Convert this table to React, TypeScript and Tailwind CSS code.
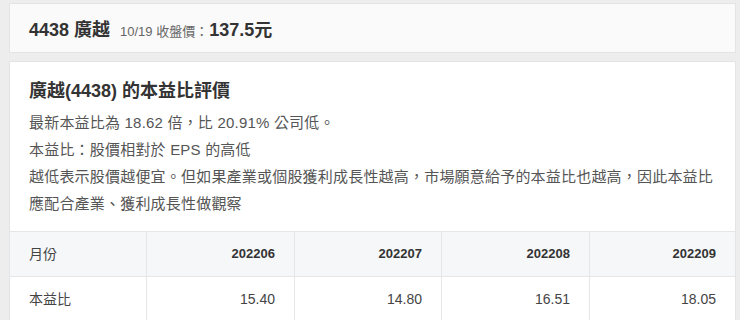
const months = ["202206", "202207", "202208", "202209"];
const values = ["15.40", "14.80", "16.51", "18.05"];

export default function App() {
  return (
    <div
      className="min-h-[320px] bg-[#ededed] pl-[9px] pr-[4px] pt-[3px] text-[#333]"
      style={{ fontFamily: '"Liberation Sans", Arial, "Noto Sans CJK TC", sans-serif' }}
    >
      <div className="flex h-[50px] items-baseline border border-[#e4e4e4] bg-[#fafafa] pl-[19px] pt-[13px]">
        <span className="text-[18px] font-bold text-[#333]">4438 廣越</span>
        <span className="ml-[10px] text-[13px] text-[#666]">10/19 收盤價：</span>
        <span className="ml-[1px] text-[18px] font-bold text-[#333]">137.5元</span>
      </div>

      <div className="mt-[8px] border border-[#e4e4e4] bg-white">
        <div className="px-[19px] pt-[17px]">
          <h2 className="text-[18px] font-bold leading-[24px] text-[#333]">廣越(4438) 的本益比評價</h2>
          <div className="mt-[6px] text-[15px] leading-[27px] tracking-[0.2px] text-[#555]">
            <p>最新本益比為 18.62 倍，比 20.91% 公司低。</p>
            <p>本益比：股價相對於 EPS 的高低</p>
            <p>越低表示股價越便宜。但如果產業或個股獲利成長性越高，市場願意給予的本益比也越高，因此本益比</p>
            <p>應配合產業、獲利成長性做觀察</p>
          </div>
        </div>

        <div className="mt-[14px] grid grid-cols-[137px_148px_147px_148px_1fr] border-t border-[#e6e6e6] text-[14px]">
          <div className="flex h-[45px] items-center border-b border-r border-[#e6e6e6] bg-[#f6f7f8] pl-[19px] text-[#444]">
            月份
          </div>
          {months.map((m, i) => (
            <div
              key={m}
              className={`flex h-[45px] items-center justify-end border-b border-[#e6e6e6] bg-[#f6f7f8] pr-[19px] text-[13px] font-bold text-[#333] ${i < 3 ? "border-r" : ""}`}
            >
              {m}
            </div>
          ))}
          <div className="flex h-[44px] items-center border-r border-[#e6e6e6] pl-[19px] text-[#444]">本益比</div>
          {values.map((v, i) => (
            <div
              key={v}
              className={`flex h-[44px] items-center justify-end border-[#e6e6e6] pr-[19px] text-[#444] ${i < 3 ? "border-r" : ""}`}
            >
              {v}
            </div>
          ))}
        </div>
      </div>
    </div>
  );
}
